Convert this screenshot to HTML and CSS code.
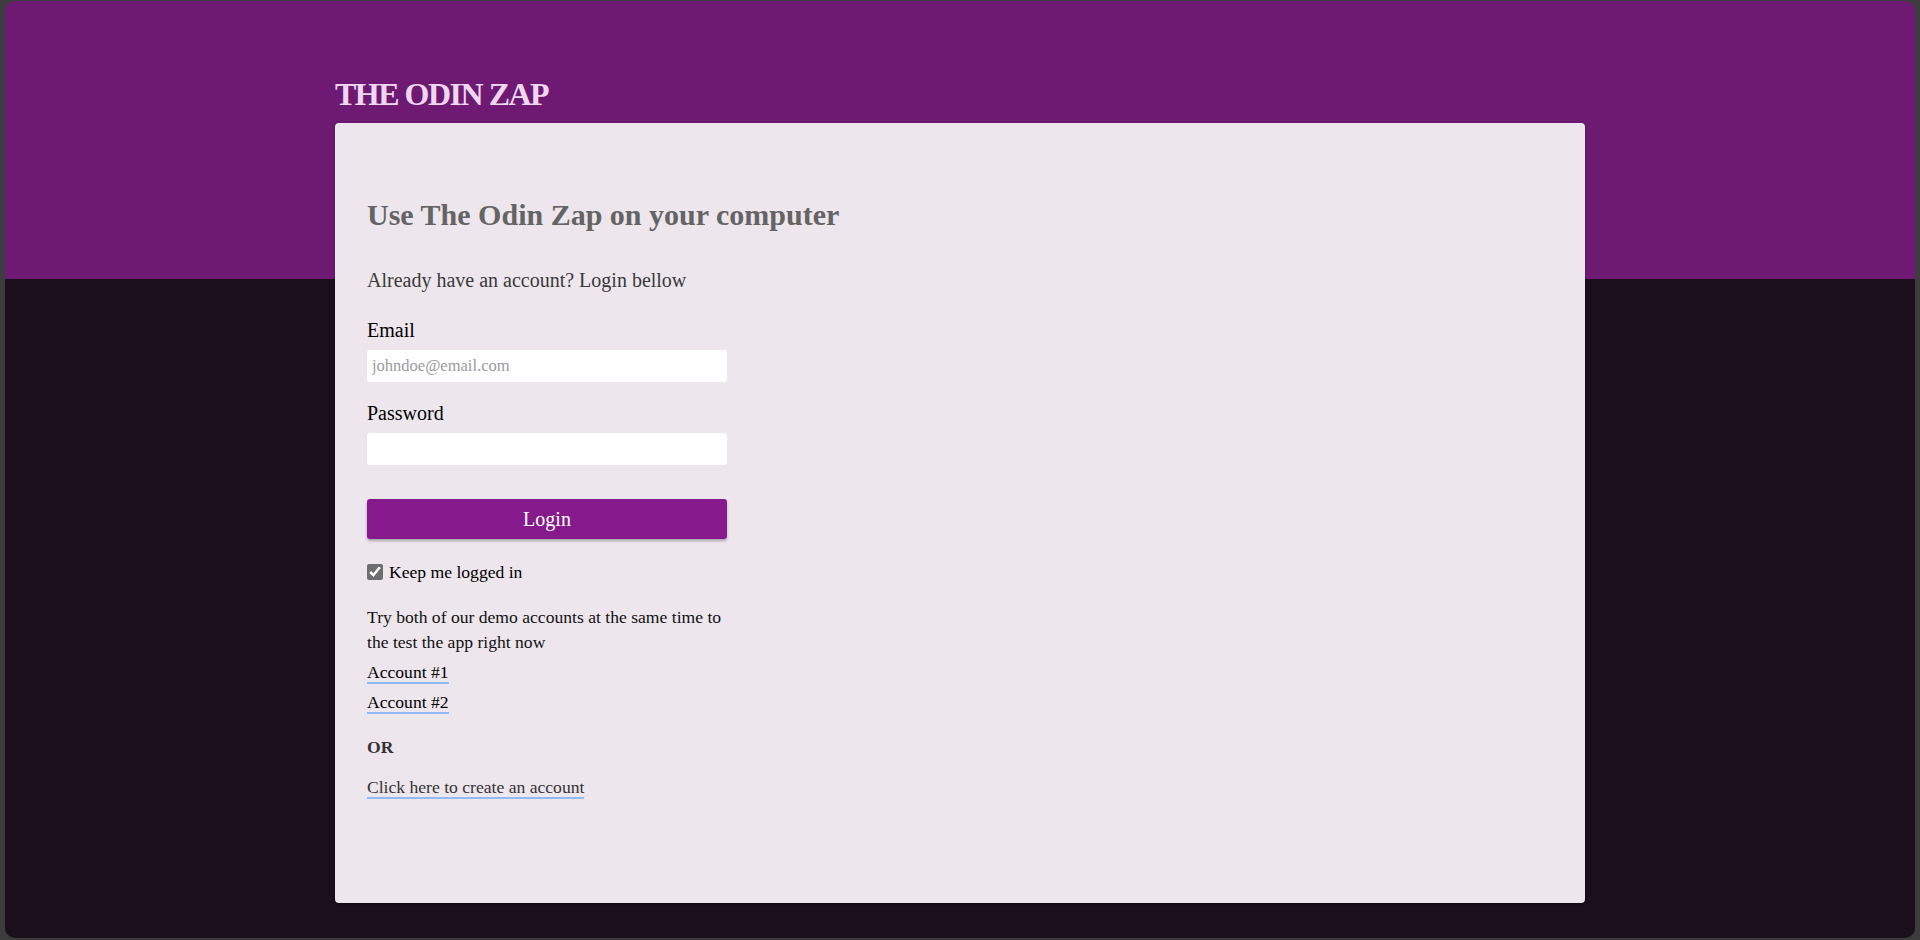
FILE: index.html
```html
<!DOCTYPE html>
<html lang="en">
<head>
<meta charset="utf-8">
<title>The Odin Zap</title>
<link rel="stylesheet" href="styles.css">
</head>
<body>
<div class="app">
  <div class="container">
    <h1 class="brand">THE ODIN ZAP</h1>
    <main class="card">
      <h2 class="card-title">Use The Odin Zap on your computer</h2>
      <p class="intro">Already have an account? Login bellow</p>
      <form class="login-form">
        <label class="field-label" for="email">Email</label>
        <input class="field-input" id="email" type="email" placeholder="johndoe@email.com">
        <label class="field-label field-label-pw" for="password">Password</label>
        <input class="field-input" id="password" type="password">
        <button class="login-btn" type="button">Login</button>
        <div class="keep-row">
          <input class="keep-check" id="keep" type="checkbox" checked>
          <label class="keep-label" for="keep">Keep me logged in</label>
        </div>
      </form>
      <p class="demo-text">Try both of our demo accounts at the same time to the test the app right now</p>
      <div class="demo-links">
        <div class="link-line"><a class="demo-link" href="#">Account #1</a></div>
        <div class="link-line"><a class="demo-link" href="#">Account #2</a></div>
      </div>
      <p class="or">OR</p>
      <div class="link-line create-line"><a class="demo-link create-link" href="#">Click here to create an account</a></div>
    </main>
  </div>
</div>
</body>
</html>
```

FILE: styles.css
```css
html, body {
  margin: 0;
  padding: 0;
}

body {
  background: #3c3c3c;
  font-family: "Liberation Serif", "Times New Roman", serif;
}

.app {
  margin: 1px 5px 2px;
  height: 937px;
  border-radius: 10px;
  overflow: hidden;
  background: linear-gradient(to bottom, #6e1a72 0, #6e1a72 278px, #1a0f1b 278px, #1a0f1b 100%);
  padding-top: 77px;
  box-sizing: border-box;
}

.container {
  width: 1250px;
  margin: 0 auto;
}

.brand {
  margin: 0 0 13px;
  font-family: "Liberation Serif", "Times New Roman", serif;
  font-weight: 700;
  font-size: 32px;
  line-height: 32px;
  letter-spacing: -1.5px;
  color: #efd7ef;
}

.card {
  display: block;
  background: #ede6ed;
  border-radius: 4px;
  height: 780px;
  box-sizing: border-box;
  padding: 74px 32px 0;
  box-shadow: 0 1px 2px rgba(0, 0, 0, 0.35);
}

.card-title {
  margin: 0;
  font-size: 30px;
  line-height: 36px;
  font-weight: 700;
  color: #646464;
}

.intro {
  margin: 35px 0 0;
  font-size: 20px;
  line-height: 24px;
  color: #3a3a3a;
}

.login-form {
  width: 360px;
  display: flex;
  flex-direction: column;
  margin-top: 26px;
}

.field-label {
  font-size: 20px;
  line-height: 24px;
  color: #000;
}

.field-label-pw {
  margin-top: 19px;
}

.field-input {
  margin-top: 8px;
  height: 32px;
  box-sizing: border-box;
  border: none;
  border-radius: 3px;
  background: #fff;
  padding: 0 5px;
  font-family: "Liberation Serif", "Times New Roman", serif;
  font-size: 16.5px;
  color: #000;
  outline: none;
}

.field-input::placeholder {
  color: #9a9aa2;
}

.login-btn {
  margin-top: 34px;
  height: 40px;
  border: none;
  border-radius: 3px;
  background: #861a8c;
  color: #fff;
  font-family: "Liberation Serif", "Times New Roman", serif;
  font-size: 20px;
  line-height: 40px;
  padding: 0;
  box-shadow: 0 2px 3px rgba(0, 0, 0, 0.28);
  cursor: pointer;
}

.keep-row {
  margin-top: 23px;
  height: 20px;
  display: flex;
  align-items: center;
  gap: 6px;
}

.keep-check {
  margin: 0;
  width: 16px;
  height: 16px;
  accent-color: #6e6e6e;
}

.keep-label {
  font-size: 17.6px;
  line-height: 20px;
  color: #000;
}

.demo-text {
  width: 360px;
  margin: 23px 0 0;
  font-size: 17.6px;
  line-height: 25px;
  color: #111;
}

.demo-links {
  margin-top: 5px;
  display: flex;
  flex-direction: column;
  gap: 5px;
}

.link-line {
  font-size: 17.6px;
  line-height: 25px;
}

.demo-link {
  color: #000;
  text-decoration: none;
  border-bottom: 2px solid #92bbf4;
}

.or {
  margin: 20px 0 0;
  font-size: 17.6px;
  line-height: 25px;
  font-weight: 700;
  color: #333;
}

.create-line {
  margin-top: 15px;
}

.create-link {
  color: #333;
}
```
